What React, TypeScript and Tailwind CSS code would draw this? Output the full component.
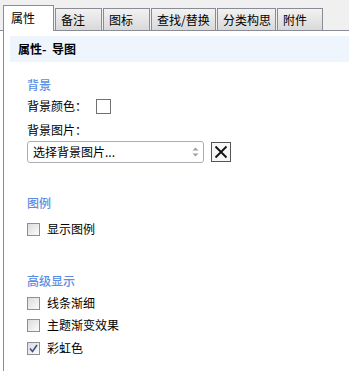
import React from "react";

const font = { fontFamily: '"Noto Sans CJK SC", "Microsoft YaHei", sans-serif' };

function Checkbox({ checked = false }: { checked?: boolean }) {
  return (
    <div className="w-[13px] h-[13px] border border-[#8e8f8f] bg-gradient-to-br from-[#dcdcdc] to-[#fbfbfb] flex items-center justify-center shrink-0">
      {checked && (
        <svg width="9" height="9" viewBox="0 0 9 9">
          <path d="M1 4.5 L3.5 7.5 L8 1" fill="none" stroke="#3d4f8a" strokeWidth="1.6" />
        </svg>
      )}
    </div>
  );
}

function CheckRow({ label, checked, mt }: { label: string; checked?: boolean; mt: string }) {
  return (
    <div className={`flex items-center h-[16px] gap-[7px] ${mt}`}>
      <Checkbox checked={checked} />
      <span>{label}</span>
    </div>
  );
}

export default function App() {
  const inactive = [
    { t: "备注", w: "w-[47px]" },
    { t: "图标", w: "w-[47px]" },
    { t: "查找/替换", w: "w-[65px]" },
    { t: "分类构思", w: "w-[59px]" },
    { t: "附件", w: "w-[46px]" },
  ];
  return (
    <div className="w-[349px] h-[371px] bg-white overflow-hidden text-[12px] text-black leading-[16px]" style={font}>
      <div className="h-[31px] bg-[#f0f0f0] flex items-end pl-[3px] border-b border-[#898c95]">
        <div className="w-[51px] h-[26px] bg-white border border-b-0 border-[#898c95] pl-[7px] pt-[4px] relative top-[1px]">
          属性
        </div>
        {inactive.map((x) => (
          <div
            key={x.t}
            className={`${x.w} h-[22px] ml-[1px] first:ml-0 border border-b-0 border-[#898c95] bg-gradient-to-b from-[#f2f2f2] to-[#d9d9d9] pl-[5px] pt-[3px]`}
          >
            {x.t}
          </div>
        ))}
      </div>
      <div className="ml-[3px] border-l border-[#898c95] h-[340px] pt-[5px] pl-[6px]">
        <div className="h-[26px] bg-[#eef5fd] pl-[8px] flex items-center font-bold">属性-&nbsp;&nbsp;导图</div>
        <div className="pl-[17px]">
          <div className="mt-[15px] text-[#5b8de4] font-medium">背景</div>
          <div className="mt-[5px] flex items-center h-[16px]">
            <span>背景颜色：</span>
            <div className="ml-[9px] w-[15px] h-[15px] border border-[#707070] bg-white" />
          </div>
          <div className="mt-[8px]">背景图片：</div>
          <div className="mt-[3px] flex items-center">
            <div className="w-[177px] h-[22px] border border-[#abadb3] rounded-[3px] flex items-center pl-[5px] pr-[4px] justify-between">
              <span>选择背景图片...</span>
              <svg width="7" height="12" viewBox="0 0 7 12">
                <path d="M0.5 4.5 L3.5 1.5 L6.5 4.5 Z" fill="#a0a0a0" />
                <path d="M0.5 7.5 L3.5 10.5 L6.5 7.5 Z" fill="#a0a0a0" />
              </svg>
            </div>
            <div className="ml-[7px] w-[20px] h-[20px] border border-[#555] bg-[#f7f7f7] flex items-center justify-center">
              <svg width="14" height="14" viewBox="0 0 14 14">
                <path d="M1.5 1.5 L12.5 12.5 M12.5 1.5 L1.5 12.5" stroke="#111" strokeWidth="1.8" />
              </svg>
            </div>
          </div>
          <div className="mt-[32px] text-[#5b8de4] font-medium">图例</div>
          <CheckRow label="显示图例" mt="mt-[10px]" />
          <div className="mt-[36px] text-[#5b8de4] font-medium">高级显示</div>
          <CheckRow label="线条渐细" mt="mt-[6px]" />
          <CheckRow label="主题渐变效果" mt="mt-[6px]" />
          <CheckRow label="彩虹色" checked mt="mt-[7px]" />
        </div>
      </div>
    </div>
  );
}
